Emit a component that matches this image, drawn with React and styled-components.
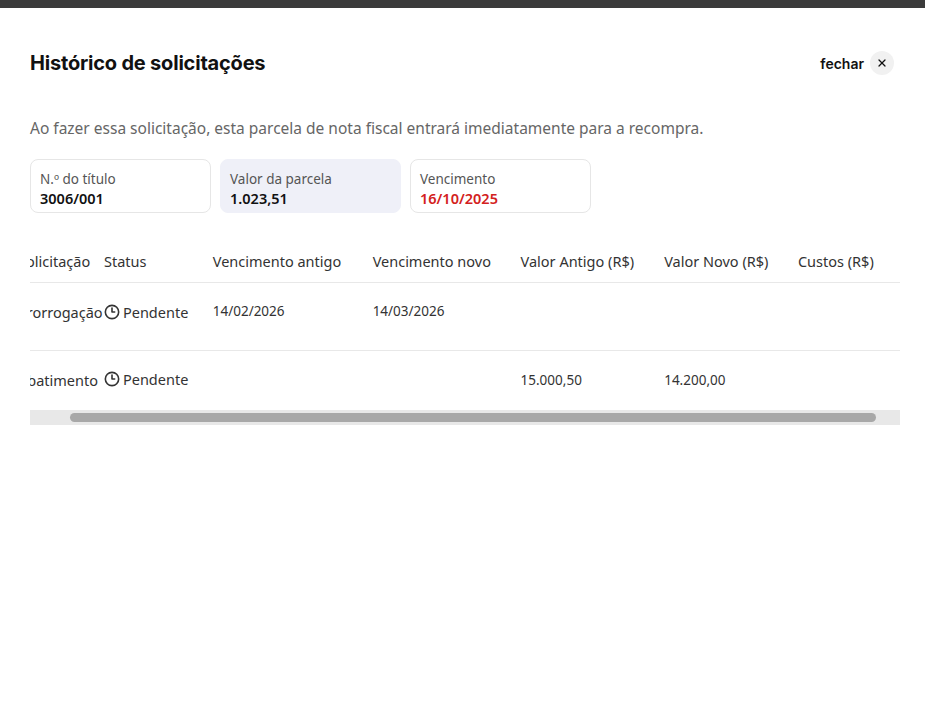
import React, { useEffect, useRef } from "react";
import styled, { createGlobalStyle } from "styled-components";
import { Clock3, X } from "lucide-react";

const Global = createGlobalStyle`
  body { margin: 0; background: #fff; font-family: "Noto Sans", "Open Sans", sans-serif; color: #222; }
`;

const TopBar = styled.div`
  height: 8px;
  background: #3b3b3b;
`;

const Modal = styled.div`
  padding: 43px 31px 0 30px;
`;

const Header = styled.div`
  display: flex;
  align-items: center;
  justify-content: space-between;
`;

const Title = styled.h1`
  margin: 0;
  font-family: Inter, sans-serif;
  font-size: 20px;
  font-weight: 700;
  letter-spacing: -0.2px;
  color: #111;
`;

const Close = styled.button`
  display: flex;
  align-items: center;
  gap: 6px;
  border: 0;
  background: none;
  padding: 0;
  font-family: Inter, sans-serif;
  font-weight: 600;
  font-size: 14px;
  color: #111;
`;

const CloseCircle = styled.span`
  width: 24px;
  height: 24px;
  border-radius: 50%;
  background: #f1f1f1;
  display: flex;
  align-items: center;
  justify-content: center;
`;

const Description = styled.p`
  margin: 42px 0 20px;
  font-size: 15.5px;
  color: #666;
`;

const Cards = styled.div`
  display: flex;
  gap: 9px;
`;

const Card = styled.div`
  width: 181px;
  height: 54px;
  box-sizing: border-box;
  border-radius: 8px;
  padding: 10px 9px;
  border: 1px solid ${(p) => (p.$highlight ? "#eff0f8" : "#e6e6e6")};
  background: ${(p) => (p.$highlight ? "#eff0f8" : "#fff")};
`;

const CardLabel = styled.div`
  font-size: 13.5px;
  color: #555;
  line-height: 18px;
`;

const CardValue = styled.div`
  font-size: 14.5px;
  font-weight: 600;
  line-height: 20px;
  color: ${(p) => p.$color || "#111"};
`;

const Scroller = styled.div`
  margin-top: 27px;
  width: 870px;
  overflow: hidden;
`;

const ScrollTrack = styled.div`
  width: 870px;
  height: 15px;
  background: #e8e8e8;
  display: flex;
  align-items: center;
  padding-left: 40px;
  box-sizing: border-box;
`;

const ScrollThumb = styled.div`
  width: 806px;
  height: 9px;
  border-radius: 5px;
  background: #a8a8a8;
`;

const Table = styled.table`
  border-collapse: collapse;
  table-layout: fixed;
  width: 1003px;
  font-size: 14.5px;
  color: #333;
`;

const Th = styled.th`
  text-align: left;
  font-weight: 400;
  height: 42px;
  padding: 0;
  white-space: nowrap;
  border-bottom: 1px solid #e8e8e8;
  width: ${(p) => p.$w}px;
`;

const Td = styled.td`
  padding: 0;
  white-space: nowrap;
  height: ${(p) => (p.$last ? 59 : 68)}px;
  vertical-align: ${(p) => (p.$last ? "middle" : "top")};
  padding-top: ${(p) => (p.$last ? "0" : "19px")};
  box-sizing: border-box;
  border-bottom: ${(p) => (p.$last ? "none" : "1px solid #e8e8e8")};
  font-size: ${(p) => (p.$small ? "13.5px" : "14.5px")};
`;

const Status = styled.span`
  display: inline-flex;
  align-items: center;
  gap: 3px;
`;

const Cancel = styled.button`
  border: 0;
  background: none;
  padding: 5px 0 0 10px;
  font-family: Inter, sans-serif;
  font-weight: 600;
  font-size: 14px;
  color: #1a56db;
`;

const cols = [
  ["Solicitação", 79],
  ["Status", 100],
  ["Vencimento antigo", 147],
  ["Vencimento novo", 136],
  ["Valor Antigo (R$)", 132],
  ["Valor Novo (R$)", 123],
  ["Custos (R$)", 95],
  ["Ação", 110],
];

const rows = [
  { tipo: "Prorrogação", va: "14/02/2026", vn: "14/03/2026", vant: "", vnovo: "", cancel: true },
  { tipo: "Abatimento", va: "", vn: "", vant: "15.000,50", vnovo: "14.200,00" },
];

export default function App() {
  const ref = useRef(null);
  useEffect(() => {
    if (ref.current) ref.current.scrollLeft = 12;
  }, []);
  return (
    <>
      <Global />
      <TopBar />
      <Modal>
        <Header>
          <Title>Histórico de solicitações</Title>
          <Close>
            fechar
            <CloseCircle>
              <X size={12} strokeWidth={2.5} />
            </CloseCircle>
          </Close>
        </Header>
        <Description>
          Ao fazer essa solicitação, esta parcela de nota fiscal entrará imediatamente para a recompra.
        </Description>
        <Cards>
          <Card>
            <CardLabel>N.º do título</CardLabel>
            <CardValue>3006/001</CardValue>
          </Card>
          <Card $highlight>
            <CardLabel>Valor da parcela</CardLabel>
            <CardValue>1.023,51</CardValue>
          </Card>
          <Card>
            <CardLabel>Vencimento</CardLabel>
            <CardValue $color="#d32020">16/10/2025</CardValue>
          </Card>
        </Cards>
        <Scroller ref={ref}>
          <Table>
            <thead>
              <tr>
                {cols.map(([h, w]) => (
                  <Th key={h} $w={w}>{h}</Th>
                ))}
              </tr>
            </thead>
            <tbody>
              {rows.map((r, i) => {
                const last = i === rows.length - 1;
                return (
                  <tr key={i}>
                    <Td $last={last}>{r.tipo}</Td>
                    <Td $last={last}>
                      <Status>
                        <Clock3 size={16} strokeWidth={2.4} />
                        Pendente
                      </Status>
                    </Td>
                    <Td $last={last} $small>{r.va}</Td>
                    <Td $last={last} $small>{r.vn}</Td>
                    <Td $last={last} $small>{r.vant}</Td>
                    <Td $last={last} $small>{r.vnovo}</Td>
                    <Td $last={last} />
                    <Td $last={last}>{r.cancel && <Cancel>cancelar</Cancel>}</Td>
                  </tr>
                );
              })}
            </tbody>
          </Table>
        </Scroller>
        <ScrollTrack>
          <ScrollThumb />
        </ScrollTrack>
      </Modal>
    </>
  );
}
